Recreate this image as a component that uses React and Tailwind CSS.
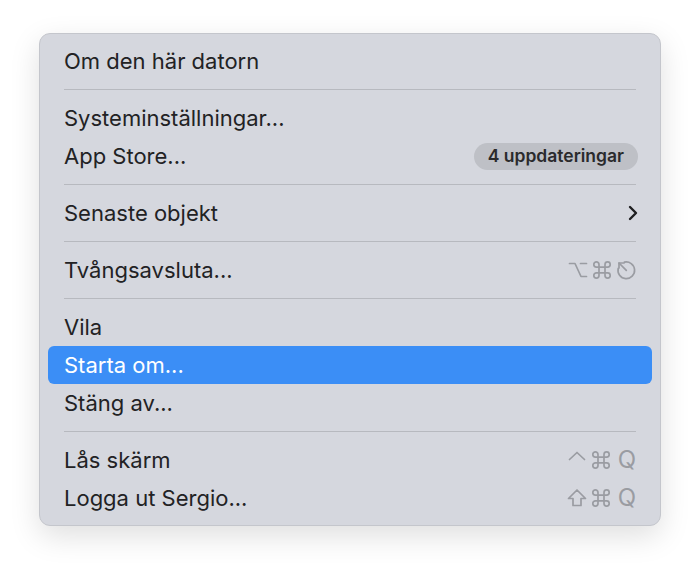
import React from "react";

const G = "#9a9ca2";

function Svg({ children, w = 20 }) {
  return (
    <svg width={w} height="20" viewBox="0 0 20 20" fill="none" stroke={G} strokeWidth="1.7" strokeLinecap="round" strokeLinejoin="round">
      {children}
    </svg>
  );
}
const Opt = () => (
  <Svg>
    <path d="M1.5 3.5h5.5l6 13h5.5" />
    <path d="M12.5 3.5H18.5" />
  </Svg>
);
const Cmd = () => (
  <Svg>
    <path d="M13 4.5v11a2.6 2.6 0 1 0 2.6-2.6H4.4a2.6 2.6 0 1 0 2.6 2.6V4.5A2.6 2.6 0 1 0 4.4 7.1h11.2A2.6 2.6 0 1 0 13 4.5" />
  </Svg>
);
const Esc = () => (
  <Svg>
    <path d="M2.2 8.4 A8.3 8.3 0 1 0 8.4 2.2" />
    <path d="M10.3 10.3 L3 3" />
    <path d="M3 8 V3 H8" />
  </Svg>
);
const Ctrl = () => (
  <Svg>
    <path d="M2.5 9.5 L10 2.5 L17.5 9.5" />
  </Svg>
);
const Shift = () => (
  <Svg>
    <path d="M10 2 L18.5 10.5 H14 V17.5 H6 V10.5 H1.5 Z" />
  </Svg>
);
const Q = () => (
  <span className="text-[24px] leading-none text-[#9a9ca2] ml-[3px]">Q</span>
);

function Item({ label, right, active }) {
  return (
    <div
      className={
        "h-[38px] px-[16px] rounded-[6px] flex items-center justify-between text-[22px] " +
        (active ? "bg-[#3b8ef6] text-white" : "text-[#222224]")
      }
    >
      <span>{label}</span>
      {right}
    </div>
  );
}

function Sep() {
  return (
    <div className="h-[19px] flex items-center px-[16px]">
      <div className="h-[1.5px] w-full bg-[#b7b9bf]" />
    </div>
  );
}

export default function App() {
  return (
    <div
      className="min-h-[572px] w-[700px] bg-white pt-[33px] pl-[39px]"
      style={{ fontFamily: "Inter, 'Noto Sans', sans-serif" }}
    >
      <div className="w-[622px] rounded-[11px] bg-[#d5d7de] border border-[#c4c6cc] shadow-[0_10px_30px_rgba(0,0,0,0.13)] p-[8px]">
        <Item label="Om den här datorn" />
        <Sep />
        <Item label="Systeminställningar..." />
        <Item
          label="App Store..."
          right={
            <span className="h-[27px] px-[14px] -mr-[2px] rounded-full bg-[#bec0c6] text-[17.5px] font-semibold text-[#2a2a2c] flex items-center">
              4 uppdateringar
            </span>
          }
        />
        <Sep />
        <Item
          label="Senaste objekt"
          right={
            <svg width="12" height="16" viewBox="0 0 12 16" fill="none" stroke="#1f1f21" strokeWidth="2.4" strokeLinecap="round" strokeLinejoin="round" className="-mr-[3px]">
              <path d="M3 2 L9 8 L3 14" />
            </svg>
          }
        />
        <Sep />
        <Item
          label="Tvångsavsluta..."
          right={
            <span className="flex items-center gap-[4px]">
              <Opt />
              <Cmd />
              <Esc />
            </span>
          }
        />
        <Sep />
        <Item label="Vila" />
        <Item label="Starta om..." active />
        <Item label="Stäng av..." />
        <Sep />
        <Item
          label="Lås skärm"
          right={
            <span className="flex items-center gap-[4px]">
              <Ctrl />
              <Cmd />
              <Q />
            </span>
          }
        />
        <Item
          label="Logga ut Sergio..."
          right={
            <span className="flex items-center gap-[4px]">
              <Shift />
              <Cmd />
              <Q />
            </span>
          }
        />
      </div>
    </div>
  );
}
